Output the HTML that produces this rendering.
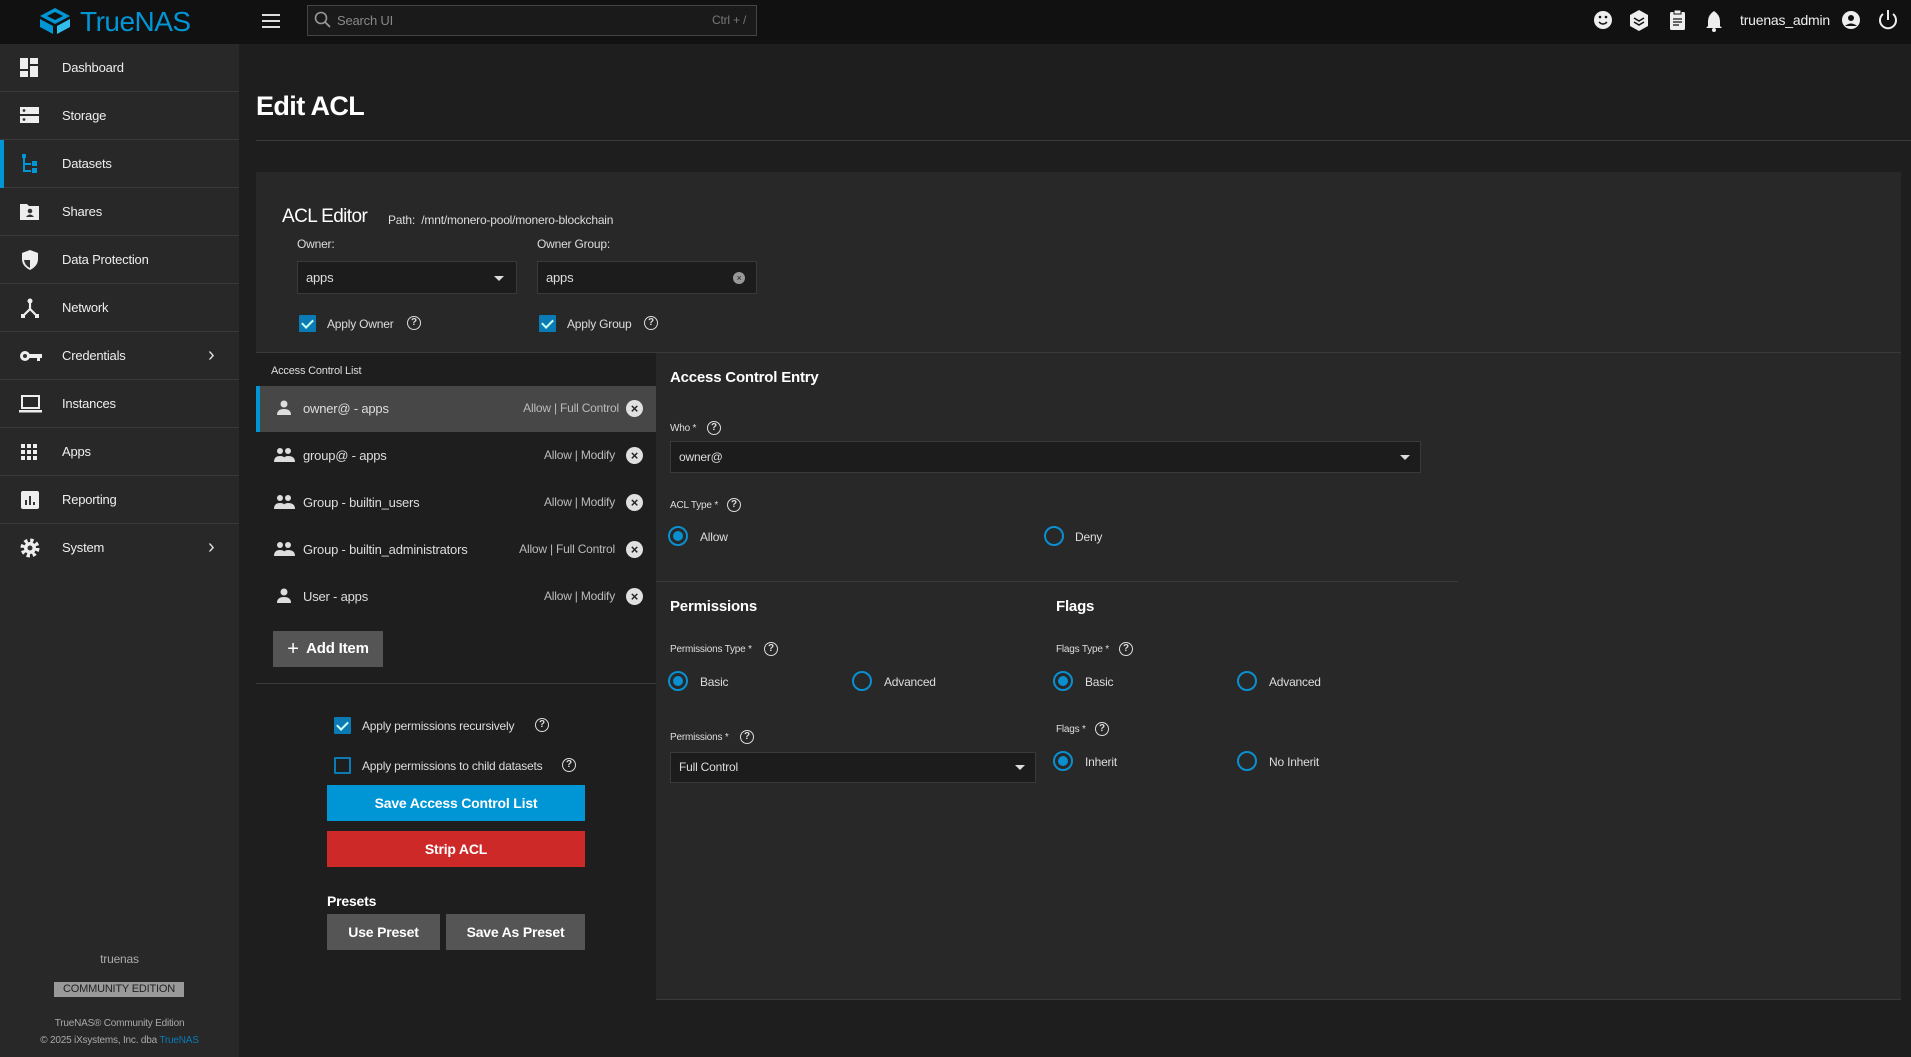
<!DOCTYPE html>
<html><head><meta charset="utf-8"><style>
*{box-sizing:border-box;margin:0;padding:0}
body{width:1911px;height:1057px;background:#1e1e1e;font-family:"Liberation Sans",sans-serif;color:#e6e6e6;position:relative;overflow:hidden;letter-spacing:-0.2px}
.a{position:absolute}
.top{left:0;top:0;width:1911px;height:44px;background:#111}
.side{left:0;top:44px;width:239px;height:1013px;background:#282828}
.item{position:absolute;left:0;width:239px;height:48px;border-bottom:1px solid #3a3a3a;font-size:13px;color:#eee}
.item span{position:absolute;left:62px;top:16px}
.item svg{position:absolute;left:19px;top:13px}
.chev{position:absolute;left:208px;top:12px;font-size:20px;color:#ddd}
.lbl{font-size:12px;color:#ddd}
.box{background:#1c1c1c;border:1px solid #3a3a3a;font-size:13px;padding:0 8px;color:#ddd}
.cb{width:17px;height:17px;background:#0a7bb5;border-radius:1px}
.cb:after{content:"";position:absolute;left:5px;top:2px;width:5px;height:9px;border:solid #cfe;border-width:0 2px 2px 0;transform:rotate(45deg)}
.help{width:14px;height:14px;border:1.5px solid #ddd;border-radius:50%;font-size:10px;text-align:center;line-height:11px;font-weight:bold;color:#ddd;letter-spacing:0}
.radio{width:20px;height:20px;border:2px solid #0a8fd0;border-radius:50%}
.radio.on:after{content:"";position:absolute;left:3px;top:3px;width:10px;height:10px;border-radius:50%;background:#0a8fd0}
.row{position:absolute;left:256px;width:400px;height:46px;font-size:13px}
.row .t{position:absolute;left:47px;top:15px;color:#ddd}
.row .r{position:absolute;right:41px;top:15px;color:#bbb;font-size:12px}
.row .x{position:absolute;left:370px;top:14px;width:17px;height:17px;border-radius:50%;background:#e0e0e0;color:#222;font-size:13px;font-weight:bold;text-align:center;line-height:17px}
.btn{text-align:center;font-weight:bold;font-size:14px;color:#fff}
</style></head><body>
<div class="a top"></div>
<svg class="a" style="left:39px;top:7px" width="32" height="28" viewBox="0 0 32 28"><path d="M16 1 L31 9 L16 17 L1 9Z" fill="#0095d5"/><path d="M1 12 L14 19 L14 27 L1 20Z" fill="#0095d5"/><path d="M31 12 L18 19 L18 27 L31 20Z" fill="#31beec"/><path d="M16 5 L24 9 L16 13 L8 9Z" fill="#111"/></svg>
<div class="a" style="left:80px;top:6px;font-size:28px;color:#0095d5;letter-spacing:-0.5px">TrueNAS</div>
<div class="a" style="left:262px;top:14px;width:18px;height:2px;background:#ddd;box-shadow:0 6px 0 #ddd,0 12px 0 #ddd"></div>
<div class="a" style="left:307px;top:5px;width:450px;height:31px;border:1px solid #444;background:#1a1a1a"></div>
<svg class="a" style="left:314px;top:11px" width="18" height="18"><circle cx="7" cy="7" r="5.5" stroke="#999" stroke-width="1.6" fill="none"/><path d="M11 11 L16 16" stroke="#999" stroke-width="1.8"/></svg>
<div class="a" style="left:337px;top:13px;font-size:13px;color:#888">Search UI</div>
<div class="a" style="left:712px;top:13px;font-size:12px;color:#777">Ctrl + /</div>
<svg class="a" style="left:1592px;top:9px" width="310" height="24" viewBox="0 0 310 24">
<circle cx="11" cy="11" r="9" fill="#eee"/><circle cx="8" cy="8" r="1.3" fill="#111"/><circle cx="14" cy="8" r="1.3" fill="#111"/><path d="M7 13 Q11 17 15 13" stroke="#111" stroke-width="1.5" fill="none"/>
<path d="M47 1 L56 6 L56 17 L47 22 L38 17 L38 6Z" fill="#eee"/><path d="M42 9 L47 12 L52 9 M42 13 L47 16 L52 13" stroke="#111" stroke-width="1.4" fill="none"/>
<rect x="78" y="3" width="15" height="18" rx="1.5" fill="#eee"/><rect x="82" y="1" width="7" height="4" fill="#eee" stroke="#111"/><path d="M81 10h9M81 13h9M81 16h6" stroke="#111" stroke-width="1.3"/>
<path d="M122 2 Q116 6 116 12 L116 17 L114 19 L130 19 L128 17 L128 12 Q128 6 122 2Z" fill="#eee"/><circle cx="122" cy="21" r="2" fill="#eee"/>
<circle cx="259" cy="11" r="9" fill="#eee"/><circle cx="259" cy="9" r="3" fill="#111"/><path d="M253 17 Q259 12 265 17" fill="#111"/>
<path d="M291 5 A8 8 0 1 0 301 5" stroke="#eee" stroke-width="2" fill="none"/><path d="M296 1 L296 11" stroke="#eee" stroke-width="2"/>
</svg>
<div class="a" style="left:1740px;top:12px;font-size:14px;color:#eee">truenas_admin</div>

<div class="a side"></div>
<div class="a" style="left:0;top:44px">
<div class="item" style="top:0"><svg width="22" height="22"><rect x="1" y="1" width="8" height="11" fill="#eee"/><rect x="11" y="1" width="8" height="6" fill="#eee"/><rect x="11" y="9" width="8" height="11" fill="#eee"/><rect x="1" y="14" width="8" height="6" fill="#eee"/></svg><span>Dashboard</span></div>
<div class="item" style="top:48px"><svg width="22" height="22"><rect x="1" y="2" width="19" height="7" fill="#eee"/><rect x="1" y="11" width="19" height="7" fill="#eee"/><circle cx="5" cy="5.5" r="1.4" fill="#333"/><circle cx="5" cy="14.5" r="1.4" fill="#333"/></svg><span>Storage</span></div>
<div class="item" style="top:96px"><div class="a" style="left:0;top:0;width:4px;height:48px;background:#0095d5"></div><svg width="22" height="22"><rect x="3" y="1" width="4" height="4" fill="#0095d5"/><path d="M5 5 V18 H12 M5 11 H12" stroke="#0095d5" stroke-width="2" fill="none"/><rect x="13" y="8" width="5" height="5" fill="#0095d5"/><rect x="13" y="15" width="5" height="5" fill="#0095d5"/></svg><span>Datasets</span></div>
<div class="item" style="top:144px"><svg width="22" height="22"><path d="M1 3 H8 L10 5 H20 V19 H1Z" fill="#eee"/><circle cx="11" cy="10" r="2.3" fill="#333"/><path d="M7 16 Q11 11 15 16Z" fill="#333"/></svg><span>Shares</span></div>
<div class="item" style="top:192px"><svg width="22" height="22"><path d="M11 1 L19 4 V10 Q19 17 11 21 Q3 17 3 10 V4Z" fill="#eee"/><path d="M11 3 V19 Q5 16 5 10 V11 H11Z" fill="#333"/></svg><span>Data Protection</span></div>
<div class="item" style="top:240px"><svg width="22" height="22"><circle cx="11" cy="4" r="2.5" fill="#eee"/><path d="M11 6 V12 L4 19 M11 12 L18 19" stroke="#eee" stroke-width="2.2" fill="none"/><rect x="2" y="17" width="4" height="4" fill="#eee"/><rect x="16" y="17" width="4" height="4" fill="#eee"/></svg><span>Network</span></div>
<div class="item" style="top:288px"><svg width="24" height="22"><circle cx="6" cy="11" r="5" fill="#eee"/><circle cx="6" cy="11" r="2" fill="#333"/><path d="M10 9 H23 V13 H21 V16 H18 V13 H10Z" fill="#eee"/></svg><span>Credentials</span><div class="chev">›</div></div>
<div class="item" style="top:336px"><svg width="24" height="22"><rect x="3" y="3" width="17" height="12" stroke="#eee" stroke-width="2" fill="none"/><rect x="0" y="17" width="23" height="2.5" fill="#eee"/></svg><span>Instances</span></div>
<div class="item" style="top:384px"><svg width="22" height="22"><g fill="#eee"><rect x="2" y="3" width="4" height="4"/><rect x="8" y="3" width="4" height="4"/><rect x="14" y="3" width="4" height="4"/><rect x="2" y="9" width="4" height="4"/><rect x="8" y="9" width="4" height="4"/><rect x="14" y="9" width="4" height="4"/><rect x="2" y="15" width="4" height="4"/><rect x="8" y="15" width="4" height="4"/><rect x="14" y="15" width="4" height="4"/></g></svg><span>Apps</span></div>
<div class="item" style="top:432px"><svg width="22" height="22"><rect x="2" y="2" width="18" height="18" rx="2" fill="#eee"/><path d="M7 16V11M11 16V7M15 16V13" stroke="#333" stroke-width="2"/></svg><span>Reporting</span></div>
<div class="item" style="top:480px;border:none"><svg width="22" height="22"><circle cx="11" cy="11" r="7" fill="none" stroke="#eee" stroke-width="5" stroke-dasharray="3 2.5"/><circle cx="11" cy="11" r="6" fill="#eee"/><circle cx="11" cy="11" r="2.5" fill="#333"/></svg><span>System</span><div class="chev">›</div></div>
</div>
<div class="a" style="left:0;top:952px;width:239px;text-align:center;font-size:12px;color:#aaa">truenas</div>
<div class="a" style="left:54px;top:982px;width:130px;height:15px;background:#999;color:#222;font-size:11px;text-align:center;line-height:15px">COMMUNITY EDITION</div>
<div class="a" style="left:0;top:1018px;width:239px;text-align:center;font-size:10px;color:#aaa">TrueNAS® Community Edition</div>
<div class="a" style="left:0;top:1035px;width:239px;text-align:center;font-size:10px;color:#aaa">© 2025 iXsystems, Inc. dba <span style="color:#0a7bb5">TrueNAS</span></div>

<div class="a" style="left:256px;top:91px;font-size:27px;font-weight:bold;color:#fff;letter-spacing:-0.6px">Edit ACL</div>
<div class="a" style="left:256px;top:140px;width:1655px;height:1px;background:#3a3a3a"></div>

<div class="a" style="left:256px;top:172px;width:1645px;height:828px;background:#282828;border-bottom:1px solid #3a3a3a"></div>
<div class="a" style="left:282px;top:206px;font-size:19px;color:#fff;letter-spacing:-0.6px">ACL Editor</div>
<div class="a" style="left:388px;top:213px;font-size:12px;color:#ddd">Path:&nbsp; /mnt/monero-pool/monero-blockchain</div>
<div class="a lbl" style="left:297px;top:237px">Owner:</div>
<div class="a lbl" style="left:537px;top:237px">Owner Group:</div>
<div class="a box" style="left:297px;top:261px;width:220px;height:33px;line-height:31px">apps</div>
<div class="a" style="left:494px;top:276px;border:5px solid transparent;border-top-color:#ddd;border-bottom:0"></div>
<div class="a box" style="left:537px;top:261px;width:220px;height:33px;line-height:31px">apps</div>
<div class="a" style="left:733px;top:272px;width:12px;height:12px;border-radius:50%;background:#999;color:#222;font-size:9px;text-align:center;line-height:12px">×</div>
<div class="a cb" style="left:299px;top:315px"></div><div class="a lbl" style="left:327px;top:317px">Apply Owner</div><div class="a help" style="left:407px;top:316px">?</div>
<div class="a cb" style="left:539px;top:315px"></div><div class="a lbl" style="left:567px;top:317px">Apply Group</div><div class="a help" style="left:644px;top:316px">?</div>

<div class="a" style="left:256px;top:352px;width:1645px;height:1px;background:#3a3a3a"></div>
<div class="a" style="left:256px;top:353px;width:400px;height:647px;background:#1e1e1e"></div>
<div class="a" style="left:271px;top:365px;font-size:11px;color:#ddd">Access Control List</div>

<div class="row" style="top:386px;background:#474747;border-left:4px solid #0095d5"><svg class="a" style="left:16px;top:14px" width="16" height="16"><circle cx="8" cy="4" r="3.5" fill="#ddd"/><path d="M1 15 Q1 9 8 9 Q15 9 15 15Z" fill="#ddd"/></svg><div class="t" style="left:43px">owner@ - apps</div><div class="r" style="right:37px">Allow | Full Control</div><div class="x" style="left:366px">×</div></div>
<div class="row" style="top:433px"><svg class="a" style="left:18px;top:14px" width="22" height="16"><circle cx="6" cy="4" r="3" fill="#ddd"/><circle cx="14" cy="4" r="3" fill="#ddd"/><path d="M0 15 Q0 9 6 9 Q12 9 12 15Z M9 15 Q9 9 14 9 Q21 9 21 15Z" fill="#ddd"/></svg><div class="t">group@ - apps</div><div class="r">Allow | Modify</div><div class="x">×</div></div>
<div class="row" style="top:480px"><svg class="a" style="left:18px;top:14px" width="22" height="16"><circle cx="6" cy="4" r="3" fill="#ddd"/><circle cx="14" cy="4" r="3" fill="#ddd"/><path d="M0 15 Q0 9 6 9 Q12 9 12 15Z M9 15 Q9 9 14 9 Q21 9 21 15Z" fill="#ddd"/></svg><div class="t">Group - builtin_users</div><div class="r">Allow | Modify</div><div class="x">×</div></div>
<div class="row" style="top:527px"><svg class="a" style="left:18px;top:14px" width="22" height="16"><circle cx="6" cy="4" r="3" fill="#ddd"/><circle cx="14" cy="4" r="3" fill="#ddd"/><path d="M0 15 Q0 9 6 9 Q12 9 12 15Z M9 15 Q9 9 14 9 Q21 9 21 15Z" fill="#ddd"/></svg><div class="t">Group - builtin_administrators</div><div class="r">Allow | Full Control</div><div class="x">×</div></div>
<div class="row" style="top:574px"><svg class="a" style="left:20px;top:14px" width="16" height="16"><circle cx="8" cy="4" r="3.5" fill="#ddd"/><path d="M1 15 Q1 9 8 9 Q15 9 15 15Z" fill="#ddd"/></svg><div class="t">User - apps</div><div class="r">Allow | Modify</div><div class="x">×</div></div>
<div class="a btn" style="left:273px;top:631px;width:110px;height:36px;background:#555;line-height:36px;font-size:15px"><span style="font-size:20px;font-weight:normal;vertical-align:-2px">+</span>&nbsp; Add Item</div>
<div class="a" style="left:256px;top:683px;width:400px;height:1px;background:#3a3a3a"></div>

<div class="a cb" style="left:334px;top:717px"></div><div class="a lbl" style="left:362px;top:719px">Apply permissions recursively</div><div class="a help" style="left:535px;top:718px">?</div>
<div class="a" style="left:334px;top:757px;width:17px;height:17px;border:2px solid #0a7bb5;border-radius:1px"></div><div class="a lbl" style="left:362px;top:759px">Apply permissions to child datasets</div><div class="a help" style="left:562px;top:758px">?</div>
<div class="a btn" style="left:327px;top:785px;width:258px;height:36px;background:#0095d5;line-height:36px">Save Access Control List</div>
<div class="a btn" style="left:327px;top:831px;width:258px;height:36px;background:#ce2929;line-height:36px">Strip ACL</div>
<div class="a" style="left:327px;top:893px;font-size:14px;font-weight:bold;color:#fff">Presets</div>
<div class="a btn" style="left:327px;top:914px;width:113px;height:36px;background:#555;line-height:36px">Use Preset</div>
<div class="a btn" style="left:446px;top:914px;width:139px;height:36px;background:#555;line-height:36px">Save As Preset</div>

<div class="a" style="left:670px;top:369px;font-size:15px;font-weight:bold;color:#fff">Access Control Entry</div>
<div class="a" style="left:670px;top:423px;font-size:10px;color:#ddd">Who *</div><div class="a help" style="left:707px;top:421px">?</div>
<div class="a box" style="left:670px;top:441px;width:751px;height:32px;line-height:30px;font-size:12px">owner@</div>
<div class="a" style="left:1400px;top:455px;border:5px solid transparent;border-top-color:#ddd;border-bottom:0"></div>
<div class="a" style="left:670px;top:500px;font-size:10px;color:#ddd">ACL Type *</div><div class="a help" style="left:727px;top:498px">?</div>
<div class="a radio on" style="left:668px;top:526px"></div><div class="a lbl" style="left:700px;top:530px">Allow</div>
<div class="a radio" style="left:1044px;top:526px"></div><div class="a lbl" style="left:1075px;top:530px">Deny</div>
<div class="a" style="left:656px;top:581px;width:802px;height:1px;background:#3a3a3a"></div>

<div class="a" style="left:670px;top:598px;font-size:15px;font-weight:bold;color:#fff">Permissions</div>
<div class="a" style="left:1056px;top:598px;font-size:15px;font-weight:bold;color:#fff">Flags</div>
<div class="a" style="left:670px;top:644px;font-size:10px;color:#ddd">Permissions Type *</div><div class="a help" style="left:764px;top:642px">?</div>
<div class="a" style="left:1056px;top:644px;font-size:10px;color:#ddd">Flags Type *</div><div class="a help" style="left:1119px;top:642px">?</div>
<div class="a radio on" style="left:668px;top:671px"></div><div class="a lbl" style="left:700px;top:675px">Basic</div>
<div class="a radio" style="left:852px;top:671px"></div><div class="a lbl" style="left:884px;top:675px">Advanced</div>
<div class="a radio on" style="left:1053px;top:671px"></div><div class="a lbl" style="left:1085px;top:675px">Basic</div>
<div class="a radio" style="left:1237px;top:671px"></div><div class="a lbl" style="left:1269px;top:675px">Advanced</div>
<div class="a" style="left:670px;top:732px;font-size:10px;color:#ddd">Permissions *</div><div class="a help" style="left:740px;top:730px">?</div>
<div class="a box" style="left:670px;top:752px;width:366px;height:31px;line-height:29px;font-size:12px">Full Control</div>
<div class="a" style="left:1015px;top:765px;border:5px solid transparent;border-top-color:#ddd;border-bottom:0"></div>
<div class="a" style="left:1056px;top:724px;font-size:10px;color:#ddd">Flags *</div><div class="a help" style="left:1095px;top:722px">?</div>
<div class="a radio on" style="left:1053px;top:751px"></div><div class="a lbl" style="left:1085px;top:755px">Inherit</div>
<div class="a radio" style="left:1237px;top:751px"></div><div class="a lbl" style="left:1269px;top:755px">No Inherit</div>
</body></html>
